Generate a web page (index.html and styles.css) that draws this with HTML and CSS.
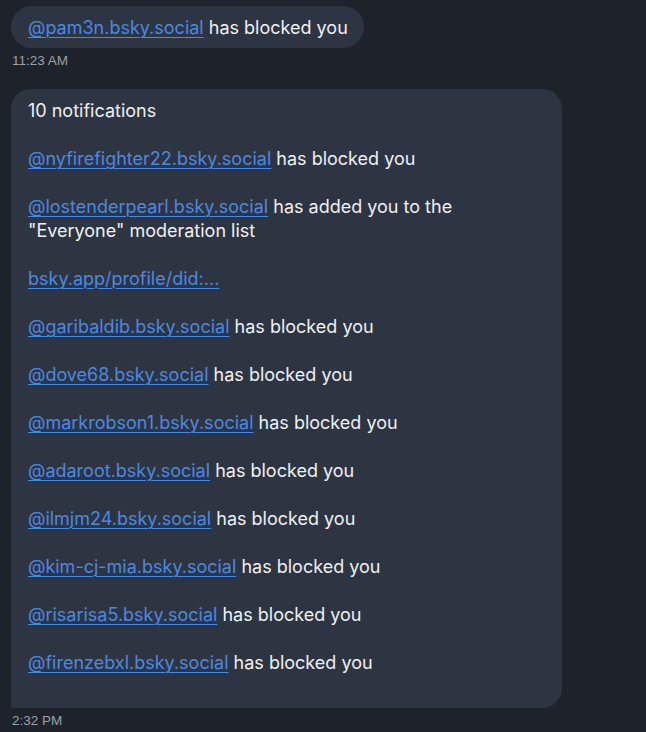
FILE: index.html
```html
<!DOCTYPE html>
<html>
<head>
<meta charset="utf-8">
<link rel="stylesheet" href="styles.css">
</head>
<body>
<div class="chat">
  <div class="msg">
    <div class="bubble round"><a href="#">@pam3n.bsky.social</a> has blocked you</div>
    <div class="time">11:23 AM</div>
  </div>
  <div class="msg">
    <div class="bubble wide">
      <p>10 notifications</p>
      <p><a href="#">@nyfirefighter22.bsky.social</a> has blocked you</p>
      <p><a href="#">@lostenderpearl.bsky.social</a> has added you to the "Everyone" moderation list</p>
      <p><a href="#">bsky.app/profile/did:...</a></p>
      <p><a href="#">@garibaldib.bsky.social</a> has blocked you</p>
      <p><a href="#">@dove68.bsky.social</a> has blocked you</p>
      <p><a href="#">@markrobson1.bsky.social</a> has blocked you</p>
      <p><a href="#">@adaroot.bsky.social</a> has blocked you</p>
      <p><a href="#">@ilmjm24.bsky.social</a> has blocked you</p>
      <p><a href="#">@kim-cj-mia.bsky.social</a> has blocked you</p>
      <p><a href="#">@risarisa5.bsky.social</a> has blocked you</p>
      <p><a href="#">@firenzebxl.bsky.social</a> has blocked you</p>
    </div>
    <div class="time">2:32 PM</div>
  </div>
</div>
</body>
</html>
```
FILE: styles.css
```css
html, body {
  margin: 0;
  padding: 0;
  background: #1e232b;
}
body {
  font-family: Inter, "Noto Sans", sans-serif;
  color: #eef0f3;
}
.chat {
  padding: 6px 0 0 11px;
  display: flex;
  flex-direction: column;
  gap: 20px;
}
.msg {
  display: flex;
  flex-direction: column;
  align-items: flex-start;
}
.bubble {
  background: #2e3542;
  font-size: 18px;
  line-height: 24px;
  padding: 10px 16px 8px 17px;
}
.round {
  border-radius: 21px;
}
.wide {
  box-sizing: border-box;
  width: 551px;
  padding: 10px 16px 33px 17px;
  border-radius: 20px 20px 20px 3px;
}
.wide p {
  margin: 0 0 24px 0;
}
.wide p:last-child {
  margin-bottom: 0;
}
a {
  color: #4a88e2;
  text-decoration: underline;
  text-underline-offset: 3px;
  text-decoration-thickness: 1px;
}
.time {
  font-family: "Liberation Sans", Arial, sans-serif;
  font-size: 13.5px;
  line-height: 16px;
  color: #9aa0a8;
  margin-top: 5px;
  padding-left: 1px;
}
```
